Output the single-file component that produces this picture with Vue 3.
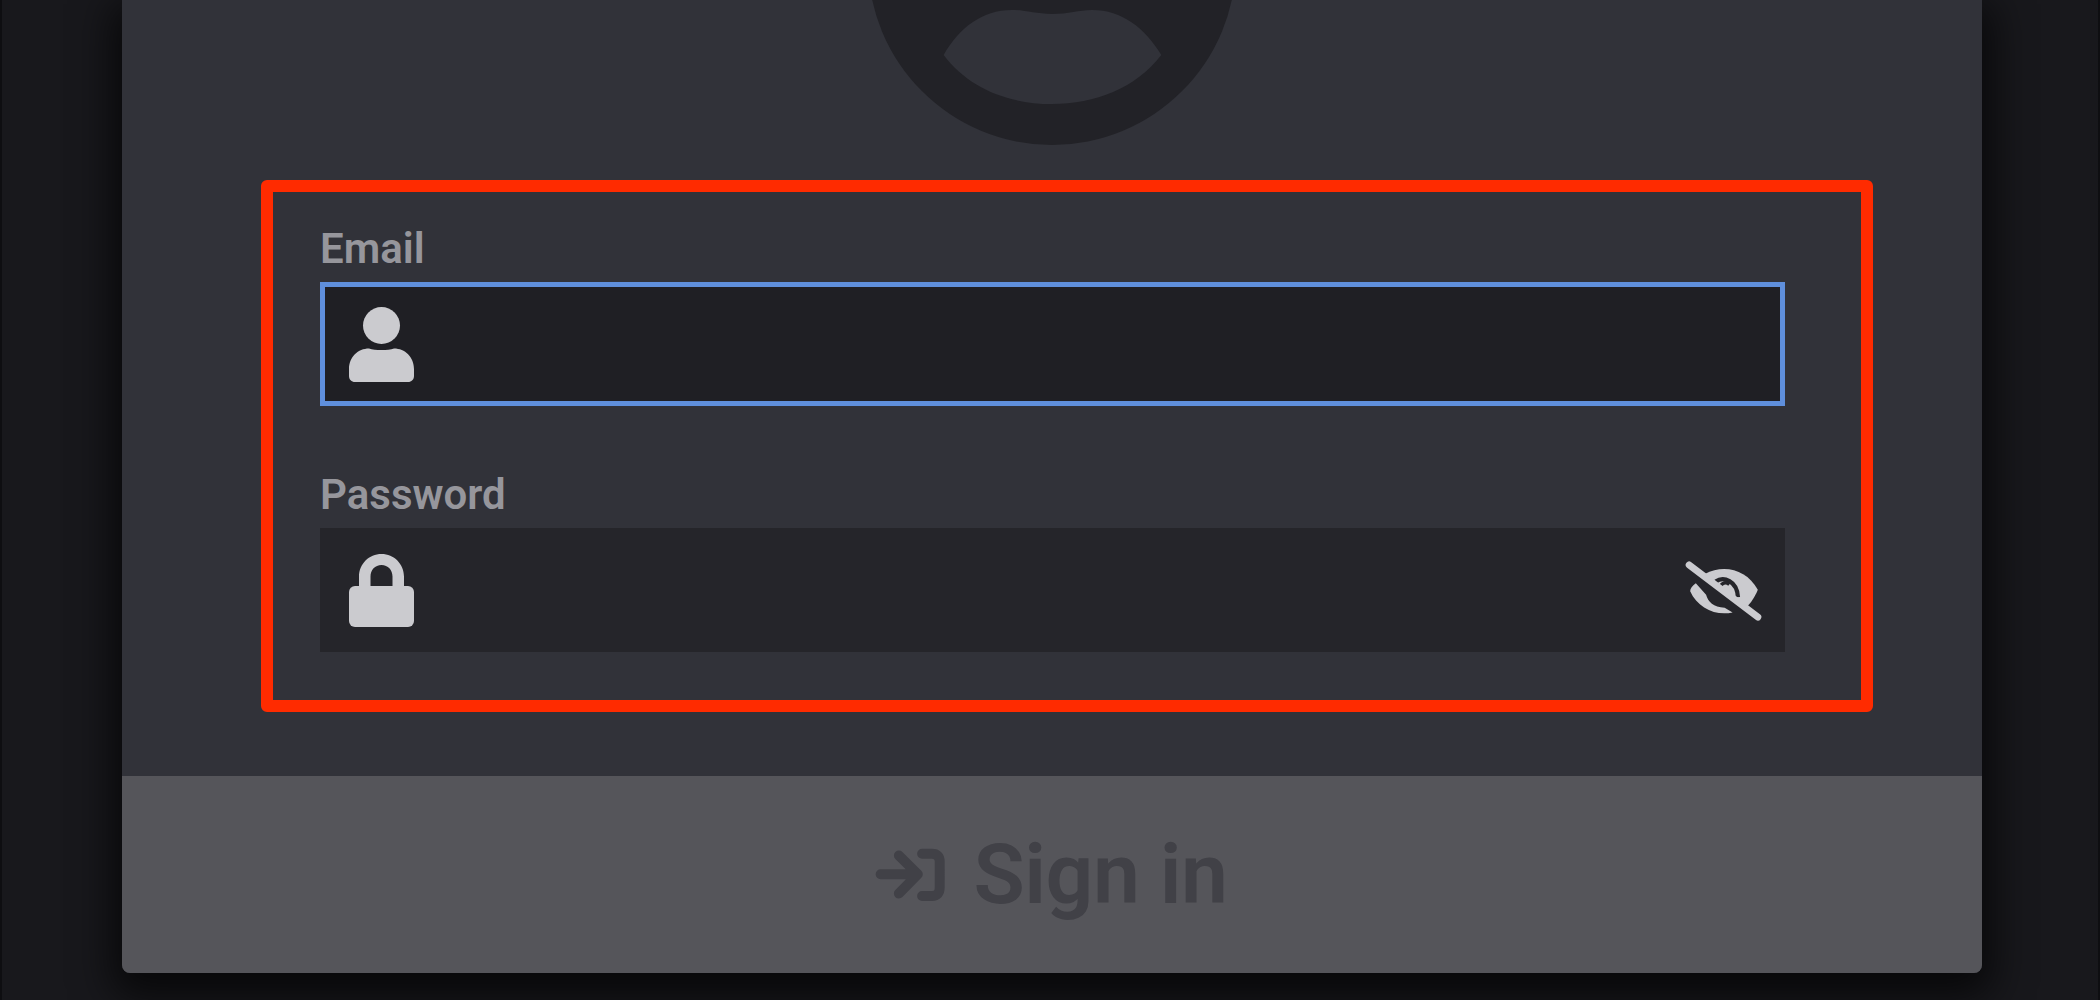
<script setup>
const title = 'Sign in'
</script>

<template>
  <div class="page">
    <main class="card">
      <svg class="avatar" viewBox="60 0 1140 438" aria-hidden="true">
        <circle cx="630" cy="-117" r="552" fill="#222227" />
        <path fill="#313239" d="M305 165C350 85 420 30 510 30C550 30 580 42 630 42C680 42 710 30 750 30C840 30 910 85 958 165C880 265 760 312 630 312C500 312 380 265 305 165Z" />
      </svg>
      <form class="form" @submit.prevent>
        <div class="field">
          <label class="label">Email</label>
          <div class="input focused">
            <svg class="lead" viewBox="0 0 65 75" aria-hidden="true">
              <circle cx="32.5" cy="18.5" r="18.5" />
              <path d="M0 62C0 50 9 41.500 20 41.500C26 43.500 39 43.500 45 41.500C56 41.500 65 50 65 62V69C65 72.500 62.500 75 59 75H6C2.500 75 0 72.500 0 69Z" />
            </svg>
          </div>
        </div>
        <div class="field">
          <label class="label">Password</label>
          <div class="input">
            <svg class="lead" viewBox="0 0 65 73" aria-hidden="true">
              <path d="M10 35V22.500C10 10 20 0 32.500 0S55 10 55 22.500V35H43.500V22.500C43.500 16 39 11 32.500 11S21.500 16 21.500 22.500V35Z" />
              <rect x="0" y="32" width="65" height="41" rx="6" />
            </svg>
            <svg class="eye" viewBox="250 175 240 190" aria-hidden="true">
              <path d="M312 220C370 190 438 206 472 268C462 292 450 310 437 320Z" />
              <path d="M285 248C274 256 268 264 268 272C290 322 345 348 396 336L372 322C338 320 322 305 316 283Z" />
              <path class="pupil" d="M345 243C368 226 410 240 412 290" />
              <path class="hook" d="M352 268C360 250 372 240 386 252" />
              <path class="slash" d="M265 193L472 350" />
            </svg>
          </div>
        </div>
      </form>
      <button class="submit" type="button">
        <svg class="enter" viewBox="100 140 220 165" aria-hidden="true">
          <path d="M120 222H225M175 165L232 222L175 280M245 160H275C290 160 298 168 298 183V262C298 279 290 287 275 287H245" />
        </svg>
        <span>{{ title }}</span>
      </button>
    </main>
  </div>
</template>

<style scoped>
.page {
  box-sizing: border-box;
  width: 2100px;
  height: 1000px;
  overflow: hidden;
  background: #18181c;
  border-left: 2px solid #0e0e11;
  border-right: 2px solid #0e0e11;
  font-family: Roboto, "Liberation Sans", sans-serif;
}
.card {
  width: 1860px;
  height: 973px;
  margin-left: 120px;
  display: flex;
  flex-direction: column;
  background: #313239;
  border-radius: 0 0 8px 8px;
  box-shadow: 0 14px 40px 10px rgba(0, 0, 0, 0.68);
  overflow: hidden;
}
.avatar {
  display: block;
  flex: none;
  width: 380px;
  height: 146px;
  margin: 0 auto;
}
.form {
  box-sizing: border-box;
  height: 532px;
  margin: 34px 109px 0 139px;
  padding: 32px 76px 0 47px;
  display: flex;
  flex-direction: column;
  gap: 64px;
  border: 12px solid #ff2b00;
  border-radius: 6px;
}
.field {
  display: flex;
  flex-direction: column;
}
.label {
  height: 58px;
  font-size: 42px;
  line-height: 50px;
  font-weight: 600;
  color: #96969c;
}
.input {
  box-sizing: border-box;
  height: 124px;
  display: flex;
  align-items: center;
  justify-content: space-between;
  padding: 0 21px 0 29px;
  background: #25252a;
}
.focused {
  background: #1f1f24;
  border: 5px solid #5f8fdc;
  padding-left: 24px;
}
.lead {
  flex: none;
  width: 65px;
  fill: #cbcbcf;
}
.eye {
  flex: none;
  width: 80px;
  height: 63px;
  fill: #cbcbcf;
}
.pupil,
.hook {
  fill: none;
  stroke: #25252a;
}
.pupil {
  stroke-width: 13;
}
.hook {
  stroke-width: 10;
}
.slash {
  fill: none;
  stroke: #cbcbcf;
  stroke-width: 21;
  stroke-linecap: round;
}
.submit {
  flex: none;
  height: 197px;
  margin-top: auto;
  display: flex;
  align-items: center;
  justify-content: center;
  gap: 27px;
  padding: 0 3px 0 0;
  border: 0;
  background: #55555a;
  color: #414147;
  font-family: inherit;
  font-size: 84px;
  font-weight: 600;
  letter-spacing: -0.5px;
}
.enter {
  flex: none;
  width: 73px;
  height: 55px;
  fill: none;
  stroke: #414147;
  stroke-width: 30;
  stroke-linecap: round;
  stroke-linejoin: round;
}
</style>
